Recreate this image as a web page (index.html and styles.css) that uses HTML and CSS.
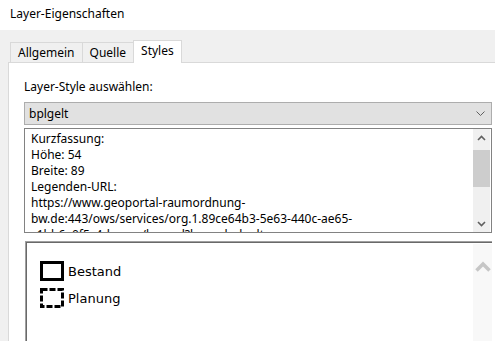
FILE: index.html
```html
<!DOCTYPE html>
<html lang="de">
<head>
  <meta charset="UTF-8" />
  <title>Layer-Eigenschaften</title>
  <link rel="stylesheet" href="styles.css">
</head>
<body>
  <!-- Fenstertitel -->
  <div class="titlebar">Layer-Eigenschaften</div>

  <div class="dialog">
    <!-- Reiter -->
    <div class="tabs">
      <div class="tab">Allgemein</div>
      <div class="tab">Quelle</div>
      <div class="tab active">Styles</div>
    </div>

    <div class="panel">
      <div class="label">Layer-Style auswählen:</div>

      <div class="combo">
        <span>bplgelt</span>
        <svg class="combo-arrow" width="9" height="5" viewBox="0 0 9 5">
          <polyline points="0.5,0.5 4.5,4.5 8.5,0.5" fill="none" stroke="#606060" stroke-width="1"/>
        </svg>
      </div>

      <!-- Beschreibung -->
      <div class="textbox">
        <div class="textbox-text">
          Kurzfassung:<br>
          Höhe: 54<br>
          Breite: 89<br>
          Legenden-URL:<br>
          https://www.geoportal-raumordnung-<br>
          bw.de:443/ows/services/org.1.89ce64b3-5e63-440c-ae65-<br>
          c1bb6a0f5c4d_wms/legend?layer=bplgelt
        </div>
        <div class="scrollbar">
          <div class="sb-btn">
            <svg width="9" height="6" viewBox="0 0 9 6">
              <polyline points="1,5 4.5,1.5 8,5" fill="none" stroke="#606060" stroke-width="1.6"/>
            </svg>
          </div>
          <div class="sb-thumb"></div>
          <div class="sb-btn sb-bottom">
            <svg width="9" height="6" viewBox="0 0 9 6">
              <polyline points="1,1 4.5,4.5 8,1" fill="none" stroke="#606060" stroke-width="1.6"/>
            </svg>
          </div>
        </div>
      </div>

      <!-- Legende -->
      <div class="legend">
        <div class="legend-items">
          <div class="legend-row">
            <svg width="24" height="20" viewBox="0 0 24 20">
              <rect x="1.5" y="1.5" width="21" height="17" fill="#fff" stroke="#000" stroke-width="3"/>
            </svg>
            <span>Bestand</span>
          </div>
          <div class="legend-row">
            <svg width="24" height="20" viewBox="0 0 24 20">
              <rect x="1.5" y="1.5" width="21" height="17" fill="#fff" stroke="#000" stroke-width="3" stroke-dasharray="6 2"/>
            </svg>
            <span>Planung</span>
          </div>
        </div>
        <div class="legend-scroll">
          <svg width="16" height="11" viewBox="0 0 16 11">
            <polyline points="1.5,9.5 8,3 14.5,9.5" fill="none" stroke="#c6c6c6" stroke-width="3.5"/>
          </svg>
        </div>
      </div>
    </div>
  </div>
</body>
</html>
```

FILE: styles.css
```css
body {
  margin: 0;
  width: 495px;
  height: 341px;
  overflow: hidden;
  background-color: #f0f0f0;
  font-family: 'Noto Sans', 'Open Sans', sans-serif;
  font-size: 12px;
  color: #000;
}
.titlebar {
  height: 30px;
  line-height: 28px;
  padding-left: 10px;
  background-color: #fff;
}
.dialog {
  padding: 10px 0 0 8px;
}
.tabs {
  display: flex;
  align-items: flex-end;
  height: 22px;
  padding-left: 2px;
}
.tab {
  height: 19px;
  line-height: 19px;
  padding: 0 7px;
  border: 1px solid #d9d9d9;
  border-bottom: none;
  margin-left: -1px;
  background-color: #f0f0f0;
}
.tab:first-child {
  margin-left: 0;
}
.tab.active {
  height: 22px;
  line-height: 20px;
  background-color: #fff;
  position: relative;
  margin-bottom: -1px;
  z-index: 1;
}
.panel {
  width: 520px;
  height: 300px;
  background-color: #fff;
  border: 1px solid #d9d9d9;
  padding: 16px 0 0 15px;
}
.label {
  height: 16px;
  line-height: 16px;
}
.combo {
  display: flex;
  align-items: center;
  justify-content: space-between;
  box-sizing: border-box;
  width: 468px;
  height: 23px;
  margin-top: 7px;
  padding: 0 6px 0 4px;
  border: 1px solid #adadad;
  background-color: #e1e1e1;
}
.textbox {
  display: flex;
  box-sizing: border-box;
  width: 468px;
  height: 105px;
  margin-top: 3px;
  border: 1px solid #828282;
  overflow: hidden;
}
.textbox-text {
  flex: 1;
  padding: 2px 0 0 6px;
  line-height: 16px;
  white-space: nowrap;
  overflow: hidden;
}
.scrollbar {
  display: flex;
  flex-direction: column;
  width: 17px;
  margin-right: 1px;
  background-color: #f0f0f0;
}
.sb-btn {
  display: flex;
  align-items: center;
  justify-content: center;
  height: 17px;
}
.sb-thumb {
  height: 37px;
  margin-top: 4px;
  background-color: #cdcdcd;
}
.sb-bottom {
  margin-top: auto;
}
.legend {
  display: flex;
  width: 466px;
  height: 120px;
  margin: 8px 0 0 1px;
  border-top: 1px solid #a0a0a0;
  border-left: 1px solid #a0a0a0;
  box-shadow: inset 1px 1px 0 #696969;
}
.legend-items {
  flex: 1;
  display: flex;
  flex-direction: column;
  gap: 7px;
  padding: 19px 0 0 14px;
}
.legend-row {
  display: flex;
  align-items: center;
  gap: 4px;
  font-family: 'DejaVu Sans', sans-serif;
  font-size: 13px;
}
.legend-scroll {
  width: 19px;
  margin-top: 2px;
  padding-top: 15px;
  text-align: center;
  background-color: #f8f8f8;
}
```
